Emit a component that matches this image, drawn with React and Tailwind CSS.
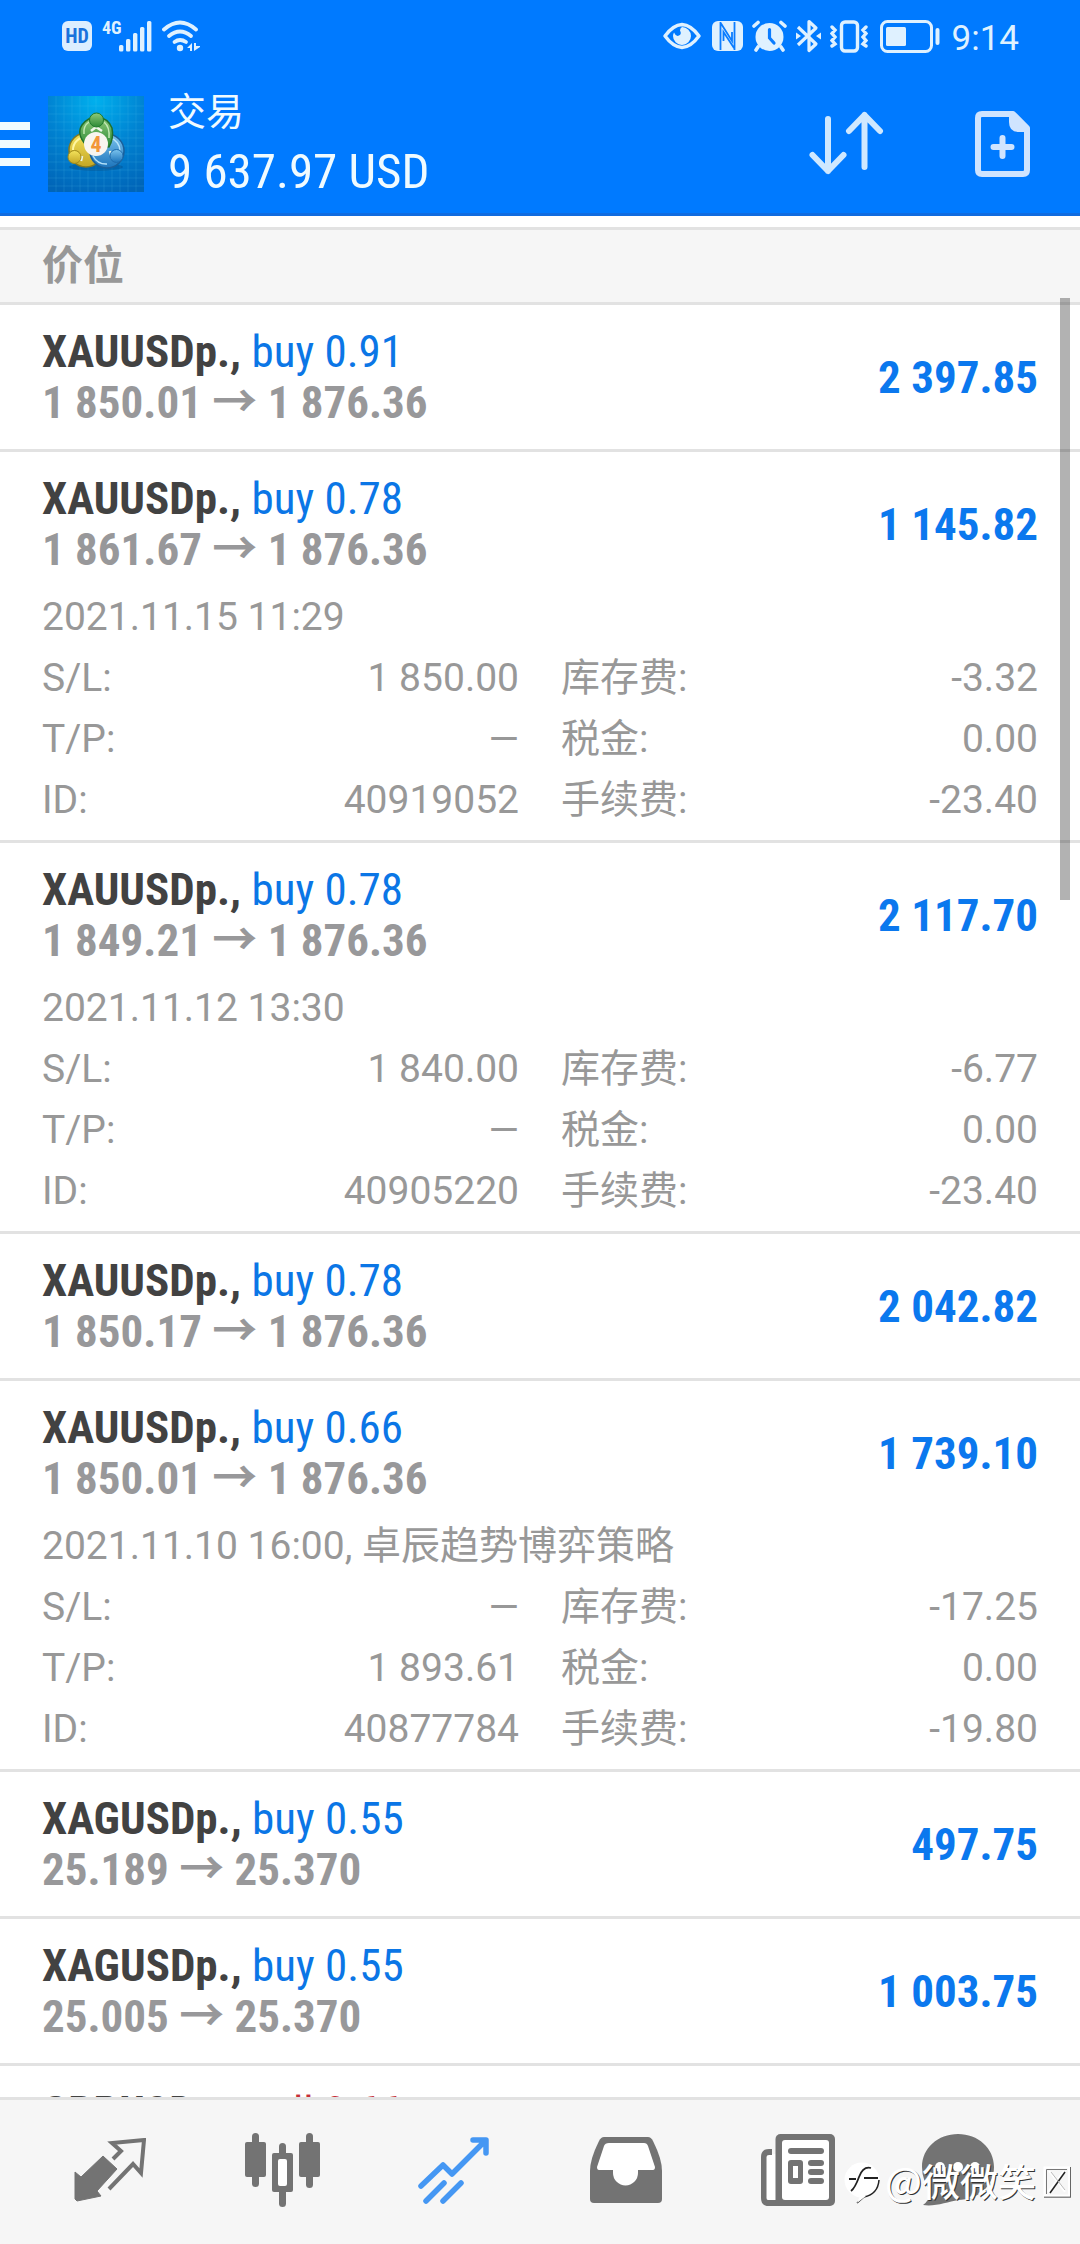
const positions = [
  { symbol: "XAUUSDp.", side: "buy", lots: "0.91", open: "1 850.01", price: "1 876.36", profit: "2 397.85" },
  {
    symbol: "XAUUSDp.", side: "buy", lots: "0.78", open: "1 861.67", price: "1 876.36", profit: "1 145.82",
    details: { time: "2021.11.15 11:29", sl: "1 850.00", tp: "—", id: "40919052", swap: "-3.32", tax: "0.00", fee: "-23.40" },
  },
  {
    symbol: "XAUUSDp.", side: "buy", lots: "0.78", open: "1 849.21", price: "1 876.36", profit: "2 117.70",
    details: { time: "2021.11.12 13:30", sl: "1 840.00", tp: "—", id: "40905220", swap: "-6.77", tax: "0.00", fee: "-23.40" },
  },
  { symbol: "XAUUSDp.", side: "buy", lots: "0.78", open: "1 850.17", price: "1 876.36", profit: "2 042.82" },
  {
    symbol: "XAUUSDp.", side: "buy", lots: "0.66", open: "1 850.01", price: "1 876.36", profit: "1 739.10",
    details: { time: "2021.11.10 16:00, 卓辰趋势博弈策略", sl: "—", tp: "1 893.61", id: "40877784", swap: "-17.25", tax: "0.00", fee: "-19.80" },
  },
  { symbol: "XAGUSDp.", side: "buy", lots: "0.55", open: "25.189", price: "25.370", profit: "497.75" },
  { symbol: "XAGUSDp.", side: "buy", lots: "0.55", open: "25.005", price: "25.370", profit: "1 003.75" },
  { symbol: "GBPUSDp.", side: "sell", lots: "0.66" },
];

function StatusBar() {
  return (
    <div className="flex h-[72px] items-center justify-between pl-[62px] pr-[61px] text-[#dff1ff]">
      <div className="flex items-center">
        <span className="flex h-[30px] w-[30px] items-center justify-center rounded-md bg-[#dceeff] text-[20px] leading-none font-bold text-[#1a72dc]">
          HD
        </span>
        <span className="ml-[10px] w-[17px] self-start text-[18px] leading-4 font-bold">4G</span>
        <svg className="h-[32px] w-[33px]" viewBox="0 0 33 32" fill="currentColor" aria-hidden="true">
          <rect x="0" y="25" width="4.4" height="6.5" rx="1.5" />
          <rect x="7" y="19" width="4.4" height="12.5" rx="1.5" />
          <rect x="14" y="13" width="4.4" height="18.5" rx="1.5" />
          <rect x="21" y="7" width="4.4" height="24.5" rx="1.5" />
          <rect x="28" y="1" width="4.4" height="30.5" rx="1.5" />
        </svg>
        <svg className="ml-[10px] h-[32px] w-[38px]" viewBox="0 0 38 32" fill="none" stroke="currentColor" strokeWidth="3.8" strokeLinecap="round" aria-hidden="true">
          <path d="M2 9.500Q18 -4.500 34 9.500" />
          <path d="M7 16Q18 7 29 16" />
          <path d="M12.500 22Q18 18 24 22" />
          <circle cx="18" cy="28" r="3.200" fill="currentColor" stroke="none" />
          <path d="M30 23v8h-2v-3h-3zM32 31v-8h2v3h4v1z" fill="currentColor" stroke="none" />
        </svg>
      </div>
      <div className="flex items-center">
        <svg className="h-[28px] w-[38px]" viewBox="0 0 38 28" fill="none" aria-hidden="true">
          <path d="M2 14Q10 3 19 2.500Q28 3 36 14Q28 25 19 25.500Q10 25 2 14Z" stroke="currentColor" strokeWidth="3.400" strokeLinejoin="round" />
          <path d="M19 5a9 9 0 1 1-9 9q0-2 1-3.500 2 4.500 5 3 3-1.500 1-5Q17 6 19 5Z" fill="currentColor" />
        </svg>
        <svg className="ml-[11px] h-[30px] w-[31px]" viewBox="0 0 31 30" aria-hidden="true">
          <rect width="31" height="30" rx="6" fill="currentColor" />
          <path d="M8.500 1V29M9 2.500L20 20V11M22.500 1V29M22 27L11.500 11V20" stroke="#0a7cff" strokeWidth="1.800" fill="none" />
        </svg>
        <svg className="ml-[9px] h-[32px] w-[35px]" viewBox="0 0 35 32" fill="none" stroke="currentColor" strokeLinecap="round" aria-hidden="true">
          <circle cx="17.500" cy="17" r="14" fill="currentColor" stroke="none" />
          <path d="M2 6L6 2.500M29 2.500L33 6" strokeWidth="3.600" />
          <path d="M6 27L4 30M29 27L31 30" strokeWidth="3.600" />
          <path d="M17.500 9.500V18L22 23" stroke="#0a7cff" strokeWidth="3.200" />
        </svg>
        <svg className="ml-[9px] h-[34px] w-[25px]" viewBox="0 0 25 34" fill="none" stroke="currentColor" strokeWidth="3.2" strokeLinejoin="round" aria-hidden="true">
          <path d="M2 8L20 25L13 31.500V2.500L20 9L2 26" />
          <path d="M0 13.500L5 17L0 20.500ZM25 13.500L20 17L25 20.500Z" fill="currentColor" stroke="none" />
        </svg>
        <svg className="ml-[9px] h-[33px] w-[38px]" viewBox="0 0 38 33" fill="none" stroke="currentColor" strokeWidth="3.4" strokeLinecap="round" aria-hidden="true">
          <rect x="11.500" y="2" width="16" height="29" rx="3.500" />
          <path d="M2 7L5 10L2 13.500L5 17L2 20.500L5 24L2 26M36 7L33 10L36 13.500L33 17L36 20.500L33 24L36 26" />
        </svg>
        <svg className="ml-3 h-[33px] w-[60px]" viewBox="0 0 60 33" fill="none" aria-hidden="true">
          <rect x="1.500" y="1.500" width="50" height="30" rx="6" stroke="currentColor" strokeWidth="3" />
          <rect x="6" y="7" width="20" height="19" rx="1.500" fill="currentColor" />
          <rect x="55.500" y="8" width="4" height="17" rx="2" fill="currentColor" />
        </svg>
        <span className="ml-3 pt-1 font-['Roboto'] text-[35px] leading-none">9:14</span>
      </div>
    </div>
  );
}

function AppLogo() {
  return (
    <svg className="h-24 w-24 shrink-0" viewBox="0 0 96 96" role="img" aria-label="MetaTrader 4">
      <defs>
        <radialGradient id="sky" cx="0.5" cy="0.05" r="1">
          <stop offset="0" stopColor="#00b0ee" />
          <stop offset="0.5" stopColor="#0083d2" />
          <stop offset="1" stopColor="#0065b8" />
        </radialGradient>
        <linearGradient id="green" x1="0" y1="0" x2="0" y2="1">
          <stop offset="0" stopColor="#8fca7a" />
          <stop offset="1" stopColor="#2b8a35" />
        </linearGradient>
        <linearGradient id="gold" x1="0" y1="0" x2="0" y2="1">
          <stop offset="0" stopColor="#f4e35c" />
          <stop offset="1" stopColor="#c4a624" />
        </linearGradient>
        <linearGradient id="azure" x1="0" y1="0" x2="0" y2="1">
          <stop offset="0" stopColor="#7cc4ee" />
          <stop offset="1" stopColor="#1c74bb" />
        </linearGradient>
      </defs>
      <rect width="96" height="96" fill="url(#sky)" />
      <path
        d="M8 0V96M16 0V96M24 0V96M32 0V96M40 0V96M48 0V96M56 0V96M64 0V96M72 0V96M80 0V96M88 0V96M0 10H96M0 18H96M0 26H96M0 34H96M0 42H96M0 50H96M0 58H96M0 66H96M0 74H96M0 82H96M0 90H96"
        stroke="#5cc4f4"
        strokeOpacity="0.16"
      />
      <ellipse cx="48" cy="71" rx="27" ry="4" fill="#003a70" fillOpacity="0.3" />
      <circle cx="38" cy="54" r="17" fill="url(#gold)" stroke="#857a22" strokeWidth="1.500" />
      <path d="M38 41A13 13 0 0 0 25 54" fill="none" stroke="#fff6a0" strokeWidth="2" />
      <circle cx="59" cy="55" r="17" fill="url(#azure)" stroke="#1a5f9a" strokeWidth="1.500" />
      <path d="M62 42A13 13 0 0 1 72 55M45 60A15 15 0 0 0 59 68" fill="none" stroke="#b4e2fa" strokeWidth="1.500" />
      <path d="M38 49Q28 38 34 29Q40 21 49 21Q60 22 64 32Q66 42 61 51Z" fill="url(#green)" stroke="#20702c" strokeWidth="1.500" />
      <path d="M36 38Q35 30 41 26M56 26Q62 31 61 42" fill="none" stroke="#c2e8b4" strokeWidth="1.500" />
      <path d="M43 35l5-4 6 4M34 60l-1 5M62 55l2 8" stroke="#eef7e8" strokeWidth="2.500" fill="none" />
      <circle cx="48.500" cy="24" r="7" fill="url(#green)" stroke="#1f7a2c" />
      <circle cx="26.500" cy="61" r="6.500" fill="url(#gold)" stroke="#a08a1a" />
      <circle cx="68.500" cy="60" r="6.500" fill="url(#azure)" stroke="#1d6cae" />
      <circle cx="48" cy="48" r="12" fill="#f8f5ef" />
      <text x="48" y="56" textAnchor="middle" fontFamily="Roboto Condensed, sans-serif" fontSize="22" fontWeight="700" fill="#f2963a">
        4
      </text>
    </svg>
  );
}

function Header() {
  return (
    <header className="border-b-[3px] border-[#106ce0] bg-[#007aff] font-['Roboto_Condensed','Noto_Sans_CJK_SC',sans-serif]">
      <StatusBar />
      <div className="flex h-[141px] items-center pt-[3px] text-[#f0fbff]">
        <button type="button" aria-label="菜单" className="flex w-[30px] shrink-0 flex-col gap-[10px]">
          <span className="h-2 bg-current" />
          <span className="h-2 bg-current" />
          <span className="h-2 bg-current" />
        </button>
        <div className="ml-[18px] flex">
          <AppLogo />
        </div>
        <div className="ml-6 flex-1">
          <h1 className="pt-1 text-[38px] leading-[52px]">交易</h1>
          <p className="text-[49px] leading-[68px]">9 637.97 USD</p>
        </div>
        <button type="button" aria-label="排序" className="mr-[91px] text-[#cfe8ff]">
          <svg className="block h-[66px] w-[75px]" viewBox="0 0 75 66" fill="none" stroke="currentColor" strokeWidth="6" strokeLinecap="round" strokeLinejoin="round" aria-hidden="true">
            <path d="M19 8V60M3.500 44L19 60L34.500 44" />
            <path d="M55.500 56V4M40 20L55.500 4L71 20" />
          </svg>
        </button>
        <button type="button" aria-label="新订单" className="mr-[50px] text-[#cfe4ff]">
          <svg className="block h-[66px] w-[55px]" viewBox="0 0 55 66" fill="none" stroke="currentColor" strokeWidth="6" strokeLinejoin="round" aria-hidden="true">
            <path d="M7 3H38L52 17V59Q52 63 48 63H7Q3 63 3 59V7Q3 3 7 3Z" />
            <path d="M34 4V11Q34 21 44 21H52L52 17L38 3Z" fill="currentColor" stroke="none" />
            <path d="M27.500 27V45M18.500 36H36.500" strokeLinecap="round" />
          </svg>
        </button>
      </div>
    </header>
  );
}

function Detail({ label, value }) {
  return (
    <div className="flex justify-between">
      <dt>{label}</dt>
      <dd>{value}</dd>
    </div>
  );
}

function Position({ item }) {
  const { details } = item;
  return (
    <li className="border-b-[3px] border-[#e2e2e2] px-[42px] pt-[21px]">
      <div className="flex items-center justify-between font-['Roboto_Condensed','Noto_Sans_CJK_SC',sans-serif] text-[45px] leading-[51px]">
        <div>
          <p>
            <span className="font-bold text-[#424242]">{item.symbol}, </span>
            <span className={item.side === "buy" ? "text-[#0b76e6]" : "text-[#c62f38]"}>
              {item.side} {item.lots}
            </span>
          </p>
          {item.open && (
            <p className="font-bold text-[#98989a]">
              {item.open} → {item.price}
            </p>
          )}
        </div>
        <p className="font-bold text-[#0b78ee]">{item.profit}</p>
      </div>
      {details ? (
        <div className="pt-[12px] pb-[9px] font-['Roboto','Noto_Sans_CJK_SC',sans-serif] text-[39px] leading-[61px] text-[#989898]">
          <p>{details.time}</p>
          <dl className="grid grid-flow-col grid-cols-2 grid-rows-3 gap-x-[42px]">
            <Detail label="S/L:" value={details.sl} />
            <Detail label="T/P:" value={details.tp} />
            <Detail label="ID:" value={details.id} />
            <Detail label="库存费:" value={details.swap} />
            <Detail label="税金:" value={details.tax} />
            <Detail label="手续费:" value={details.fee} />
          </dl>
        </div>
      ) : (
        <div className="h-[21px]" />
      )}
    </li>
  );
}

function QuotesIcon() {
  return (
    <svg className="h-16 w-[72px]" viewBox="0 0 72 64" aria-hidden="true">
      <path d="M1 34L7 39L29 18L43 31L23 53L27 58L3 63L1 61Z" fill="currentColor" stroke="currentColor" strokeLinejoin="round" />
      <path d="M39 21L47 13L38 5L70 2L67 35L59 26L35 51" fill="none" stroke="currentColor" strokeWidth="4" />
    </svg>
  );
}

function CandlesIcon() {
  return (
    <svg className="h-[74px] w-[75px]" viewBox="0 0 75 74" fill="currentColor" aria-hidden="true">
      <rect x="7" width="7" height="54" rx="3.500" />
      <rect y="9" width="21" height="35" rx="2" />
      <rect x="34" y="10" width="7" height="64" rx="3.500" />
      <rect x="27" y="20" width="21" height="39" rx="2" />
      <rect x="33" y="26" width="9" height="27" rx="2" fill="#fff" />
      <rect x="61" width="7" height="55" rx="3.500" />
      <rect x="54" y="9" width="21" height="35" rx="2" />
    </svg>
  );
}

function TradeIcon() {
  return (
    <svg className="h-[67px] w-[72px]" viewBox="0 0 72 67" fill="none" stroke="currentColor" strokeWidth="5.500" strokeLinecap="round" strokeLinejoin="round" aria-hidden="true">
      <path d="M3 49L25 28L34 37L67 4M55 3H68V16" />
      <path d="M8 64L26 46M25 64L43 46" />
    </svg>
  );
}

function InboxIcon() {
  return (
    <svg className="h-[66px] w-[72px]" viewBox="0 0 72 66" aria-hidden="true">
      <path d="M14 0H58Q61 0 63 4Q72 22 72 34V62Q72 66 68 66H4Q0 66 0 62V34Q0 22 9 4Q11 0 14 0Z" fill="currentColor" />
      <path d="M19 6H54Q57 6 58 9L65 30Q65 33 63 33H48V36A12.500 12.500 0 0 1 23 36V33H9Q7 33 7 30L14 9Q15 6 19 6Z" fill="#fff" />
    </svg>
  );
}

function NewsIcon() {
  return (
    <svg className="h-[72px] w-[74px]" viewBox="0 0 74 72" fill="currentColor" aria-hidden="true">
      <path d="M5 20H15V67H5Z" fill="#fff" />
      <path d="M11 15H8Q0 15 0 23V64Q0 72 8 72H20V66H7Q5.500 66 5.500 64V23Q5.500 21 8 21H11Z" />
      <rect x="14.500" width="59.500" height="72" rx="5" />
      <rect x="21" y="6" width="47" height="60" rx="3" fill="#fff" />
      <rect x="27" y="14" width="36" height="6" rx="3" />
      <rect x="27" y="26" width="15" height="24" rx="3" />
      <rect x="32" y="32" width="5" height="12" fill="#fff" />
      <rect x="47" y="26" width="16" height="6" rx="3" />
      <rect x="47" y="35" width="16" height="6" rx="3" />
      <rect x="47" y="44" width="16" height="6" rx="3" />
    </svg>
  );
}

function ChatIcon() {
  return (
    <svg className="h-[72px] w-[72px]" viewBox="0 0 72 72" aria-hidden="true">
      <path d="M36 0C56 0 72 14 72 33S56 66 36 66C26 68 12 73 1 71Q7 67 9 57Q0 47 0 33C0 14 16 0 36 0Z" fill="currentColor" />
      <circle cx="18" cy="33" r="5" fill="#fff" />
      <circle cx="36" cy="33" r="5" fill="#fff" />
      <circle cx="53" cy="33" r="5" fill="#fff" />
    </svg>
  );
}

const tabs = [
  { label: "行情", Icon: QuotesIcon },
  { label: "图表", Icon: CandlesIcon },
  { label: "交易", Icon: TradeIcon, active: true },
  { label: "历史", Icon: InboxIcon },
  { label: "新闻", Icon: NewsIcon },
  { label: "聊天", Icon: ChatIcon },
];

function Watermark() {
  return (
    <div className="pointer-events-none absolute right-[9px] bottom-10 flex h-[44px] items-center font-['Noto_Sans_CJK_SC',sans-serif] text-[38px] leading-none text-white">
      <svg className="mr-1 h-[44px] w-[37px]" viewBox="0 0 37 44" fill="none" aria-hidden="true">
        <circle cx="18" cy="20" r="17.500" fill="#fff" />
        <path d="M35 20Q34 34 20 37L13 43" stroke="#222" strokeWidth="1.500" />
        <path d="M13 43L16 36L22 36Z" fill="#fff" />
        <path d="M27 8Q19 6 15 17T7 31M5 19H12M20 18H34" stroke="#222" strokeWidth="1.800" />
      </svg>
      <span className="pb-1 font-medium [text-shadow:1px_1px_0_#333]">@微微笑</span>
      <svg className="ml-[7px] h-[32px] w-[28px]" viewBox="0 0 28 32" fill="none" aria-hidden="true">
        <path d="M1 31H27.500V1" stroke="#666" strokeWidth="1.500" />
        <rect x="1.500" y="1.500" width="24.500" height="28" stroke="#fff" strokeWidth="2" />
        <path d="M3.500 28V3.500H24" stroke="#777" />
        <path d="M6 5L22 26M21 5L5 26" stroke="#fff" strokeWidth="2" />
        <path d="M22 6L7 27" stroke="#222" strokeWidth="1.500" />
        <path d="M8 6L22 24" stroke="#bbb" />
      </svg>
    </div>
  );
}

export default function App() {
  return (
    <div className="flex h-screen flex-col bg-white">
      <Header />
      <main className="relative min-h-0 flex-1 overflow-hidden pt-[11px]">
        <h2 className="border-y-[3px] border-[#e2e2e2] bg-[#f6f6f6] px-[42px] pb-2 font-['Noto_Sans_CJK_SC',sans-serif] text-[41px] leading-[64px] font-bold text-[#989898]">
          价位
        </h2>
        <ul>
          {positions.map((item, index) => (
            <Position key={index} item={item} />
          ))}
        </ul>
        <div className="absolute top-[82px] right-[10px] h-[32%] w-[10px] bg-black/30" />
      </main>
      <nav className="relative grid h-[147px] shrink-0 grid-cols-[repeat(5,172fr)_148fr] items-center border-t-[3px] border-[#e2e2e2] bg-[#f6f6f6] pr-12 pb-1 pl-6">
        {tabs.map(({ label, Icon, active }) => (
          <button
            key={label}
            type="button"
            aria-label={label}
            className={active ? "flex justify-center text-[#4597f3]" : "flex justify-center text-[#737373]"}
          >
            <Icon />
          </button>
        ))}
        <Watermark />
      </nav>
    </div>
  );
}
